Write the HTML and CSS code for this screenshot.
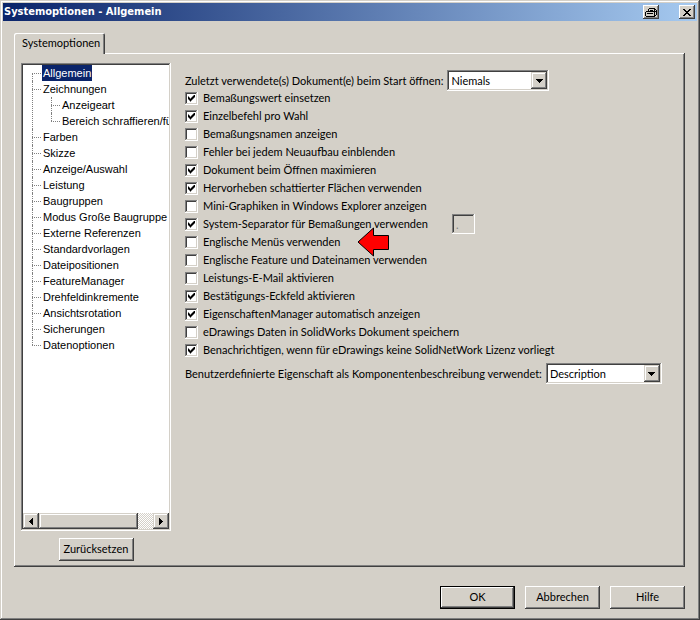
FILE: index.html
```html
<!DOCTYPE html>
<html lang="de">
<head>
<meta charset="utf-8">
<title>Systemoptionen - Allgemein</title>
<link rel="stylesheet" href="styles.css">
</head>
<body>
<main class="window">
  <header class="titlebar">
    <h1 class="title">Systemoptionen - Allgemein</h1>
    <button class="title-button print" type="button" aria-label="Drucken">
      <svg width="12" height="9" viewBox="0 0 12 9" shape-rendering="crispEdges"><path d="M4 0h6v1H4zM3 1h1v2H3zM9 1h1v2H9zM5 2h3v1H5zM10 1h1v1h-1zM11 2h1v5h-1zM1 3h9v1H1zM0 4h1v4H0zM9 4h1v4H9zM10 3h1v1h-1zM2 5h6v1H2zM1 8h9v1H1zM10 7h1v1h-1z"/></svg>
    </button>
    <button class="title-button" type="button" aria-label="Schließen">
      <svg width="8" height="7" viewBox="0 0 8 7" shape-rendering="crispEdges"><path d="M0 0h2v1h1v1h2V1h1V0h2v1H7v1H6v1H5v1h1v1h1v1h1v1H6V6H5V5H3v1H2v1H0V6h1V5h1V4h1V3H2V2H1V1H0z"/></svg>
    </button>
  </header>

  <div class="client">
    <div class="tabs"><button class="tab" type="button">Systemoptionen</button></div>
    <section class="panel">
      <nav class="sidebar">
        <div class="tree-box">
          <ul class="tree">
            <li><a class="selected" href="#">Allgemein</a></li>
            <li><a href="#">Zeichnungen</a>
              <ul>
                <li><a href="#">Anzeigeart</a></li>
                <li><a href="#">Bereich schraffieren/füllen</a></li>
              </ul>
            </li>
            <li><a href="#">Farben</a></li>
            <li><a href="#">Skizze</a></li>
            <li><a href="#">Anzeige/Auswahl</a></li>
            <li><a href="#">Leistung</a></li>
            <li><a href="#">Baugruppen</a></li>
            <li><a href="#">Modus Große Baugruppe</a></li>
            <li><a href="#">Externe Referenzen</a></li>
            <li><a href="#">Standardvorlagen</a></li>
            <li><a href="#">Dateipositionen</a></li>
            <li><a href="#">FeatureManager</a></li>
            <li><a href="#">Drehfeldinkremente</a></li>
            <li><a href="#">Ansichtsrotation</a></li>
            <li><a href="#">Sicherungen</a></li>
            <li><a href="#">Datenoptionen</a></li>
          </ul>
          <div class="scrollbar">
            <button class="scroll-button" type="button" aria-label="Nach links"><svg width="4" height="7" viewBox="0 0 4 7" shape-rendering="crispEdges"><path d="M3 0h1v7H3V6H2V5H1V4H0V3h1V2h1V1h1z"/></svg></button>
            <div class="thumb"></div>
            <div class="track"></div>
            <button class="scroll-button" type="button" aria-label="Nach rechts"><svg width="4" height="7" viewBox="0 0 4 7" shape-rendering="crispEdges"><path d="M0 0h1v1h1v1h1v1h1v1H3v1H2v1H1v1H0z"/></svg></button>
          </div>
        </div>
        <button class="button" type="button">Zurücksetzen</button>
      </nav>

      <form class="options">
        <div class="field">
          <label for="start">Zuletzt verwendete(s) Dokument(e) beim Start öffnen:</label>
          <span class="combo start-combo"><select id="start"><option>Niemals</option></select><span class="drop"><svg width="7" height="4" viewBox="0 0 7 4" shape-rendering="crispEdges"><path d="M0 0h7v1H6v1H5v1H4v1H3V3H2V2H1V1H0z"/></svg></span></span>
        </div>
        <div class="checks">
          <div class="check"><input type="checkbox" id="c1" checked><label for="c1">Bemaßungswert einsetzen</label></div>
          <div class="check"><input type="checkbox" id="c2" checked><label for="c2">Einzelbefehl pro Wahl</label></div>
          <div class="check"><input type="checkbox" id="c3"><label for="c3">Bemaßungsnamen anzeigen</label></div>
          <div class="check"><input type="checkbox" id="c4"><label for="c4">Fehler bei jedem Neuaufbau einblenden</label></div>
          <div class="check"><input type="checkbox" id="c5" checked><label for="c5">Dokument beim Öffnen maximieren</label></div>
          <div class="check"><input type="checkbox" id="c6" checked><label for="c6">Hervorheben schattierter Flächen verwenden</label></div>
          <div class="check"><input type="checkbox" id="c7"><label for="c7">Mini-Graphiken in Windows Explorer anzeigen</label></div>
          <div class="check"><input type="checkbox" id="c8" checked><label for="c8">System-Separator für Bemaßungen verwenden</label><input class="separator" type="text" value="." aria-label="Separator" disabled></div>
          <div class="check"><input type="checkbox" id="c9"><label for="c9">Englische Menüs verwenden</label><svg class="arrow" width="32" height="30" viewBox="0 0 32 30"><path d="M1 15 16.500 1V8.500h15v14h-15V29z" fill="#f00" stroke="#000"/></svg></div>
          <div class="check"><input type="checkbox" id="c10"><label for="c10">Englische Feature und Dateinamen verwenden</label></div>
          <div class="check"><input type="checkbox" id="c11"><label for="c11">Leistungs-E-Mail aktivieren</label></div>
          <div class="check"><input type="checkbox" id="c12" checked><label for="c12">Bestätigungs-Eckfeld aktivieren</label></div>
          <div class="check"><input type="checkbox" id="c13" checked><label for="c13">EigenschaftenManager automatisch anzeigen</label></div>
          <div class="check"><input type="checkbox" id="c14"><label for="c14">eDrawings Daten in SolidWorks Dokument speichern</label></div>
          <div class="check"><input type="checkbox" id="c15" checked><label for="c15">Benachrichtigen, wenn für eDrawings keine SolidNetWork Lizenz vorliegt</label></div>
        </div>
        <div class="field">
          <label for="prop">Benutzerdefinierte Eigenschaft als Komponentenbeschreibung verwendet:</label>
          <span class="combo prop-combo"><select id="prop"><option>Description</option></select><span class="drop"><svg width="7" height="4" viewBox="0 0 7 4" shape-rendering="crispEdges"><path d="M0 0h7v1H6v1H5v1H4v1H3V3H2V2H1V1H0z"/></svg></span></span>
        </div>
      </form>
    </section>

    <footer class="actions">
      <button class="button default" type="button">OK</button>
      <button class="button" type="button">Abbrechen</button>
      <button class="button" type="button">Hilfe</button>
    </footer>
  </div>
</main>
</body>
</html>
```
FILE: styles.css
```css
:root {
  --face: #d4d0c8;
  --shade: #808080;
  --dark: #404040;
  --navy: #0a246a;
  --raised: inset -1px -1px var(--dark), inset 1px 1px #fff, inset -2px -2px var(--shade);
  --sunken: inset -1px -1px #fff, inset 1px 1px var(--shade), inset -2px -2px var(--face), inset 2px 2px var(--dark);
}

* { box-sizing: border-box; }

body {
  margin: 0;
  background: var(--face);
  color: #000;
  font: 11px/16px Lato, "Liberation Sans", Arial, sans-serif;
}

button, select, input { font: inherit; color: inherit; margin: 0; }
button { padding: 0; border: 0; background: var(--face); box-shadow: var(--raised); }
svg { display: block; }

.window {
  display: flex;
  flex-direction: column;
  min-height: 100vh;
  padding: 3px;
  box-shadow: inset -1px -1px var(--dark), inset 1px 1px var(--face), inset -2px -2px var(--shade), inset 2px 2px #fff;
}

.titlebar {
  display: flex;
  align-items: center;
  height: 18px;
  padding: 0 2px 0 1px;
  background: linear-gradient(90deg, var(--navy), #a6caf0);
}
.title {
  flex: 1;
  margin: 0;
  color: #fff;
  font: bold 11px/18px "DejaVu Sans Condensed", "DejaVu Sans", sans-serif;
}
.title-button {
  display: grid;
  place-items: center;
  width: 16px;
  height: 14px;
}
.print { margin-right: 20px; }

.client {
  flex: 1;
  display: flex;
  flex-direction: column;
  padding: 12px 12px 8px 11px;
}

.tabs { display: flex; }
.tab {
  z-index: 1;
  height: 21px;
  margin-bottom: -1px;
  padding: 0 5px 2px 8px;
  border-radius: 2px 2px 0 0;
  box-shadow: inset 1px 1px #fff, inset -1px 0 var(--dark), inset -2px 0 var(--shade);
}

.panel {
  flex: 1;
  display: flex;
  gap: 14px;
  padding: 10px 7px 6px;
  box-shadow: var(--raised);
}

.sidebar {
  display: flex;
  flex-direction: column;
  align-items: center;
  gap: 7px;
  width: 150px;
}
.tree-box {
  flex: 1;
  display: flex;
  flex-direction: column;
  width: 100%;
  padding: 2px;
  overflow: hidden;
  background: #fff;
  box-shadow: var(--sunken);
}
.tree, .tree ul { margin: 0; padding: 0; list-style: none; }
.tree {
  flex: 1;
  padding-left: 9px;
  overflow: hidden;
  white-space: nowrap;
  font-family: "Liberation Sans", Arial, sans-serif;
}
.tree ul { padding-left: 9px; }
.tree li { position: relative; padding-left: 10px; }
.tree li::before {
  content: "";
  position: absolute;
  left: 0;
  top: 8px;
  width: 9px;
  border-top: 1px dotted var(--shade);
}
.tree li::after {
  content: "";
  position: absolute;
  left: 0;
  top: 0;
  height: 100%;
  border-left: 1px dotted var(--shade);
}
.tree > li:first-child::after { top: 8px; }
.tree li:last-child::after { height: 8px; }
.tree a {
  display: block;
  width: max-content;
  padding: 0 1px;
  color: inherit;
  text-decoration: none;
}
.tree .selected { background: var(--navy); color: #fff; }

.scrollbar { display: flex; height: 16px; }
.scroll-button, .drop {
  display: grid;
  place-items: center;
  width: 16px;
  background: var(--face);
  box-shadow: inset -1px -1px var(--dark), inset 1px 1px var(--face), inset -2px -2px var(--shade), inset 2px 2px #fff;
}
.thumb {
  flex: 1;
  background: var(--face);
  box-shadow: inset -1px -1px var(--dark), inset 1px 1px var(--face), inset -2px -2px var(--shade), inset 2px 2px #fff;
}
.track {
  width: 15px;
  background: repeating-conic-gradient(#fff 0 25%, var(--face) 0 50%) 0 0 / 2px 2px;
}

.button { width: 75px; height: 23px; padding-bottom: 1px; }
.default { box-shadow: inset 0 0 0 1px #000, inset -2px -2px var(--dark), inset 2px 2px #fff, inset -3px -3px var(--shade); }

.options { flex: 1; padding-top: 7px; white-space: nowrap; }
.field { display: flex; align-items: center; }
.field label { flex: none; }
.combo {
  display: flex;
  height: 21px;
  padding: 2px;
  background: #fff;
  box-shadow: var(--sunken);
}
.combo select {
  flex: 1;
  min-width: 0;
  padding: 0 2px;
  border: 0;
  background: none;
  appearance: none;
}
.drop { pointer-events: none; }
.combo { margin-left: 4px; }
.start-combo { width: 102px; }
.prop-combo { width: 116px; }

.checks { margin-top: -2px; padding-bottom: 4px; }
.check { position: relative; display: flex; align-items: center; height: 18px; }
.check [type="checkbox"] {
  appearance: none;
  width: 13px;
  height: 13px;
  margin-right: 5px;
  background: #fff;
  box-shadow: var(--sunken);
}
.check [type="checkbox"]:checked::before {
  content: "";
  display: block;
  width: 7px;
  height: 7px;
  margin: 3px;
  background: #000;
  clip-path: polygon(0 2px, 1px 2px, 1px 3px, 2px 3px, 2px 4px, 3px 4px, 3px 3px, 4px 3px, 4px 2px, 5px 2px, 5px 1px, 6px 1px, 6px 0, 7px 0, 7px 3px, 6px 3px, 6px 4px, 5px 4px, 5px 5px, 4px 5px, 4px 6px, 3px 6px, 3px 7px, 2px 7px, 2px 6px, 1px 6px, 1px 5px, 0 5px);
}
.separator {
  position: absolute;
  left: 267px;
  width: 23px;
  height: 20px;
  padding: 0 4px;
  border: 0;
  background: var(--face);
  color: var(--shade);
  box-shadow: var(--sunken);
}
.arrow { position: absolute; left: 172px; z-index: 1; }

.actions {
  display: flex;
  justify-content: flex-end;
  gap: 10px;
  padding-top: 19px;
}
```
